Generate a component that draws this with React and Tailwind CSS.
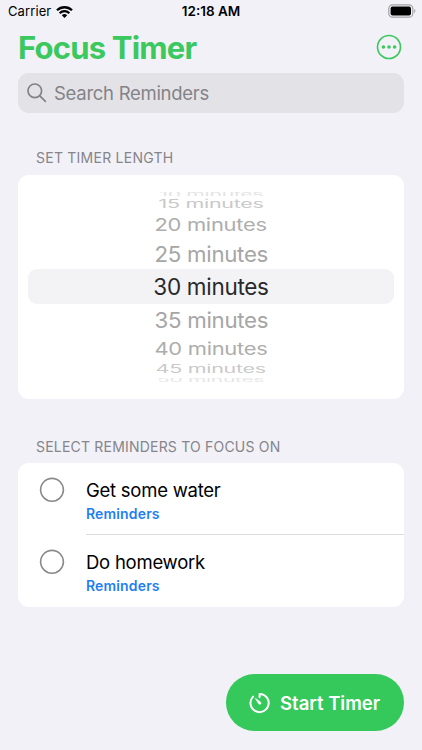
import React from "react";

const wheel = [
  { label: "10 minutes", row: "mt-[2px] mb-px h-[4px] text-[#e4e4e4] items-center overflow-hidden", text: "scale-x-[0.94] scale-y-[0.36]" },
  { label: "15 minutes", row: "h-[14px] text-[#c9c9c9] items-center", text: "scale-x-[0.955] scale-y-[0.5]" },
  { label: "20 minutes", row: "h-[27px] text-[#adadad] items-center", text: "scale-x-[0.975] scale-y-[0.77]" },
  { label: "25 minutes", row: "h-[31px] text-[#a6a6a6] items-center", text: "scale-x-[0.99] scale-y-[0.96]" },
  { label: "30 minutes", row: "h-[35px] text-[#29292b] items-center rounded-[9px] bg-[#f3f3f5]", text: "" },
  { label: "35 minutes", row: "h-[31px] text-[#a6a6a6] items-center", text: "scale-x-[0.99] scale-y-[0.96]" },
  { label: "40 minutes", row: "h-[27px] text-[#adadad] items-center", text: "scale-x-[0.975] scale-y-[0.77]" },
  { label: "45 minutes", row: "h-[14px] text-[#cacaca] items-center", text: "scale-x-[0.955] scale-y-[0.5]" },
  { label: "50 minutes", row: "mt-[2px] h-[4px] text-[#e6e6e6] items-center overflow-hidden", text: "scale-x-[0.93] scale-y-[0.3]" },
];

const reminders = ["Get some water", "Do homework"];

function StatusBar() {
  return (
    <div className="flex h-[23px] items-center justify-between pl-[8px] pr-[6px] text-black">
      <div className="flex w-[139px] items-center gap-[5px]">
        <span className="text-[13px] leading-[23px] tracking-[0.1px]">Carrier</span>
        <svg width="17" height="12" viewBox="0 0 17 12" fill="none" stroke="#000" strokeWidth="2.3">
          <path d="M1 4.3a10.7 10.7 0 0 1 15 0" />
          <path d="M3.7 7.2a6.8 6.8 0 0 1 9.6 0" />
          <path d="M8.5 12L5.8 9.2a3.9 3.9 0 0 1 5.4 0z" fill="#000" stroke="none" />
        </svg>
      </div>
      <span className="text-[13.5px] font-semibold leading-[23px]">12:18 AM</span>
      <div className="flex w-[141px] justify-end">
        <svg width="28" height="14" viewBox="0 0 28 14" className="-mt-px">
          <rect x="0.8" y="0.8" width="24" height="12.4" rx="3.8" fill="none" stroke="#a3a3a7" strokeWidth="1.2" />
          <rect x="2.6" y="2.6" width="20.4" height="8.8" rx="2" fill="#000" />
          <path d="M26.2 5v4c1.6-.7 1.6-3.3 0-4z" fill="#a3a3a7" />
        </svg>
      </div>
    </div>
  );
}

export default function App() {
  return (
    <div className="flex h-[750px] w-[422px] flex-col overflow-hidden bg-[#f2f1f7] font-['Inter','Liberation_Sans',sans-serif]">
      <StatusBar />
      <header className="flex h-[50px] items-center justify-between pl-[18px] pr-[20px]">
        <h1 className="whitespace-nowrap text-[31px] font-bold leading-[48px] tracking-[-0.8px] text-[#3bc85e]">Focus Timer</h1>
        <button className="-mt-[2px] flex" aria-label="More">
          <svg width="26" height="26" viewBox="0 0 26 26">
            <circle cx="13" cy="13" r="11.5" fill="none" stroke="#3bc85e" strokeWidth="1.6" />
            <circle cx="7.4" cy="13" r="1.8" fill="#3bc85e" />
            <circle cx="13" cy="13" r="1.8" fill="#3bc85e" />
            <circle cx="18.6" cy="13" r="1.8" fill="#3bc85e" />
          </svg>
        </button>
      </header>

      <div className="mx-[18px] flex h-[40px] shrink-0 items-center gap-[7px] rounded-[11px] bg-[#e3e2e7] pl-[9px] text-[#838387]">
        <svg width="20" height="20" viewBox="0 0 20 20" fill="none" stroke="currentColor" strokeWidth="1.7" strokeLinecap="round">
          <circle cx="7.8" cy="7.8" r="6.8" />
          <path d="M12.8 12.8l5.6 5.6" />
        </svg>
        <span className="text-[18.5px] leading-[40px] tracking-[-0.28px]">Search Reminders</span>
      </div>

      <h2 className="mt-[35px] ml-[36px] h-[20px] text-[14px] leading-[20px] tracking-[0.24px] text-[#85858a]">SET TIMER LENGTH</h2>
      <section className="mx-[18px] mt-[7px] flex h-[224px] shrink-0 flex-col rounded-[11px] bg-white px-[10px] pt-[15px]">
        {wheel.map((item) => (
          <div key={item.label} className={`flex shrink-0 justify-center ${item.row}`}>
            <span className={`block whitespace-nowrap text-[22.5px] leading-[28px] tracking-[-0.3px] ${item.text}`}>{item.label}</span>
          </div>
        ))}
      </section>

      <h2 className="mt-[38px] ml-[36px] h-[20px] text-[14px] leading-[20px] tracking-[0.2px] text-[#85858a]">SELECT REMINDERS TO FOCUS ON</h2>
      <section className="mx-[18px] mt-[6px] shrink-0 rounded-[11px] bg-white">
        {reminders.map((name, i) => (
          <div key={name} className="flex h-[72px] pl-[21px]">
            <svg className="mt-[13.5px] shrink-0" width="26" height="26" viewBox="0 0 26 26">
              <circle cx="13" cy="12.8" r="11.4" fill="none" stroke="#8a8a8e" strokeWidth="1.6" />
            </svg>
            <div className={`ml-[21px] flex-1 pt-[14px] ${i === 0 ? "border-b border-[#dcdcde]" : ""}`}>
              <p className="text-[18.5px] leading-[26px] tracking-[-0.25px] text-black">{name}</p>
              <p className="text-[14px] font-semibold leading-[22px] tracking-[0.15px] text-[#1f7ff0]">Reminders</p>
            </div>
          </div>
        ))}
      </section>

      <button className="mt-auto mr-[18px] mb-[19px] flex h-[57px] w-[178px] shrink-0 items-center gap-[9px] self-end rounded-full bg-[#35c85a] pl-[23px] text-white">
        <svg width="22" height="22" viewBox="0 0 22 22" fill="none" stroke="#fff" strokeWidth="2" strokeLinecap="round" strokeLinejoin="round">
          <path d="M10.6 5.2V1.9A9.1 9.1 0 1 1 4.1 4.6" />
          <path d="M6.7 6.6l4.9 3.6a1.2 1.2 0 0 1-1.7 1.7z" fill="#fff" strokeWidth="0.8" />
        </svg>
        <span className="whitespace-nowrap text-[18.5px] font-semibold leading-[26px]">Start Timer</span>
      </button>
    </div>
  );
}
